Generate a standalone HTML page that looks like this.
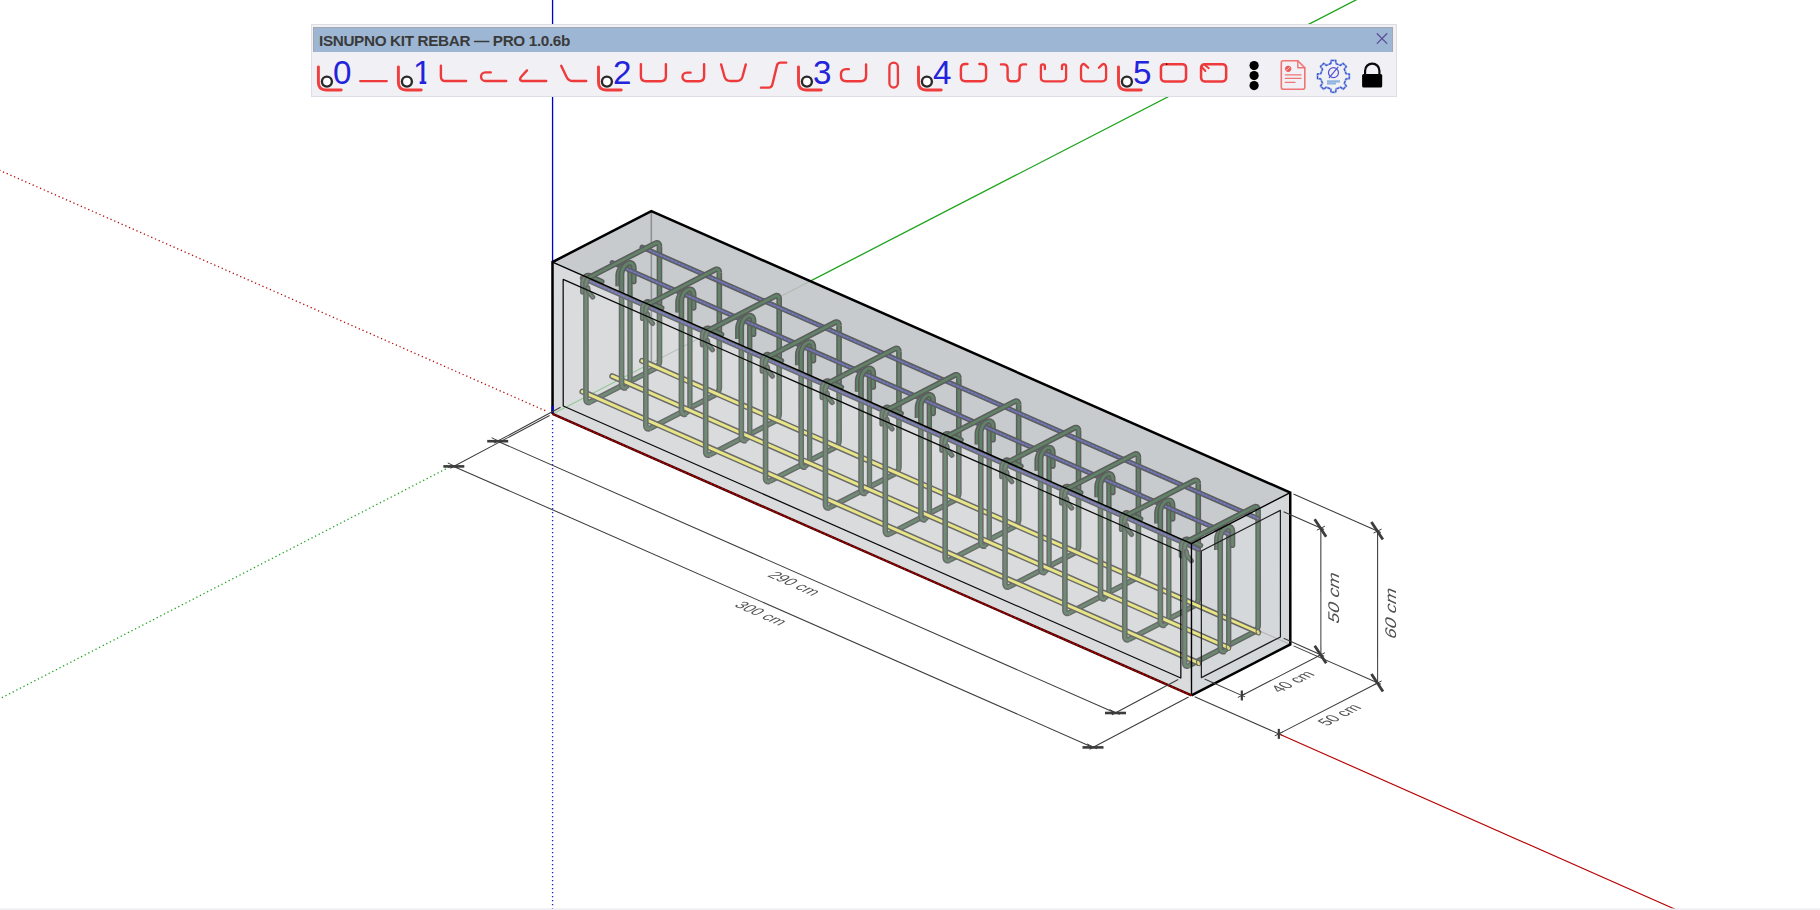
<!DOCTYPE html>
<html lang="en">
<head>
<meta charset="utf-8">
<title>ISNUPNO KIT REBAR</title>
<style>
html,body{margin:0;padding:0;background:#fff;}
body{width:1820px;height:910px;overflow:hidden;position:relative;font-family:"Liberation Sans",sans-serif;}
#scene{position:absolute;left:0;top:0;display:block;}

#tb{position:absolute;left:311px;top:24px;width:1084px;height:71px;background:#f1f0f5;border:1px solid #dddde5;}
#tbtitle{position:absolute;left:1px;top:2px;width:1078px;height:23.5px;background:#9db6d3;border-top:1px solid #a4a8ae;border-left:1px solid #a4a8ae;border-right:1px solid #a4a8ae;}
#tbtitle span{position:absolute;left:5.0px;top:4.2px;font:bold 15.3px/18px "Liberation Sans",sans-serif;color:#3a3a3a;white-space:nowrap;letter-spacing:-0.36px;}
#tbicons{position:absolute;left:-1px;top:-1px;}
#tbicons text{font-family:"Liberation Sans",sans-serif;font-size:33.2px;fill:#2323dc;}

</style>
</head>
<body>
<svg id="scene" width="1820" height="910" viewBox="0 0 1820 910" fill="none" stroke-linejoin="round">
<rect width="1820" height="910" fill="#fff"/>
<path d="M552.57 0 V413.92" stroke="#0000d2" stroke-width="1.3"/>
<path d="M552.57 419.92 V910" stroke="#1c1cd2" stroke-width="1.35" stroke-dasharray="1.3 2.7"/>
<path d="M552.57 413.92 L1530.39 -89.95" stroke="#1ba31b" stroke-width="1.3"/>
<path d="M453.02 465.23 L-69.67 734.57" stroke="#1fa41f" stroke-width="1.3" stroke-dasharray="1.3 2.75"/>
<path d="M545.25 410.7 L-88.02 131.72" stroke="#b41212" stroke-width="1.3" stroke-dasharray="1.3 2.75"/>
<path d="M552.5 262.05 L651.32 211.12 L1290.25 492.6 L1191.43 543.53Z" fill="#c8cbcd"/>
<path d="M552.57 413.92 L552.5 262.05 L1191.43 543.53 L1191.5 695.4Z" fill="#d7dadc"/>
<path d="M1191.5 695.4 L1191.43 543.53 L1290.25 492.6 L1290.32 644.47Z" fill="#d4d7d9"/>
<path d="M651.4 363 L651.32 211.12" stroke="#8f9294" stroke-width="1.6"/>
<path d="M651.4 363 L1290.32 644.47" stroke="#a9adaf" stroke-width="1"/>
<path d="M552.57 413.92 L651.4 363" stroke="#8cc48c" stroke-width="1.1"/>
<path d="M651.4 363 L810.51 281.01" stroke="#aab8aa" stroke-width="1"/>
<g id="rebar">
<path d="M589.94 402.11 L655.56 368.3 L656.17 367.92 L656.78 367.42 L657.35 366.82 L657.88 366.14 L658.35 365.38 L658.75 364.57 L659.08 363.72 L659.31 362.86 L659.46 362.02 L659.51 361.2 L659.45 246.28" stroke="#5c5d5c" stroke-width="5.65" stroke-linecap="butt"/>
<path d="M589.94 402.11 L655.56 368.3 L656.17 367.92 L656.78 367.42 L657.35 366.82 L657.88 366.14 L658.35 365.38 L658.75 364.57 L659.08 363.72 L659.31 362.86 L659.46 362.02 L659.51 361.2 L659.45 246.28" stroke="#618368" stroke-width="2.65" stroke-linecap="butt"/>
<path d="M649.8 428.49 L715.42 394.67 L716.04 394.29 L716.65 393.8 L717.22 393.2 L717.75 392.51 L718.22 391.75 L718.62 390.94 L718.94 390.1 L719.18 389.24 L719.33 388.39 L719.37 387.57 L719.32 272.66" stroke="#5c5d5c" stroke-width="5.65" stroke-linecap="butt"/>
<path d="M649.8 428.49 L715.42 394.67 L716.04 394.29 L716.65 393.8 L717.22 393.2 L717.75 392.51 L718.22 391.75 L718.62 390.94 L718.94 390.1 L719.18 389.24 L719.33 388.39 L719.37 387.57 L719.32 272.66" stroke="#618368" stroke-width="2.65" stroke-linecap="butt"/>
<path d="M709.67 454.86 L775.29 421.05 L775.91 420.67 L776.51 420.17 L777.09 419.57 L777.61 418.88 L778.09 418.13 L778.49 417.31 L778.81 416.47 L779.05 415.61 L779.19 414.77 L779.24 413.95 L779.18 299.03" stroke="#5c5d5c" stroke-width="5.65" stroke-linecap="butt"/>
<path d="M709.67 454.86 L775.29 421.05 L775.91 420.67 L776.51 420.17 L777.09 419.57 L777.61 418.88 L778.09 418.13 L778.49 417.31 L778.81 416.47 L779.05 415.61 L779.19 414.77 L779.24 413.95 L779.18 299.03" stroke="#618368" stroke-width="2.65" stroke-linecap="butt"/>
<path d="M769.54 481.24 L835.16 447.42 L835.78 447.04 L836.38 446.55 L836.95 445.95 L837.48 445.26 L837.95 444.5 L838.36 443.69 L838.68 442.84 L838.92 441.99 L839.06 441.14 L839.11 440.32 L839.05 325.4" stroke="#5c5d5c" stroke-width="5.65" stroke-linecap="butt"/>
<path d="M769.54 481.24 L835.16 447.42 L835.78 447.04 L836.38 446.55 L836.95 445.95 L837.48 445.26 L837.95 444.5 L838.36 443.69 L838.68 442.84 L838.92 441.99 L839.06 441.14 L839.11 440.32 L839.05 325.4" stroke="#618368" stroke-width="2.65" stroke-linecap="butt"/>
<path d="M829.41 507.61 L895.03 473.8 L895.64 473.42 L896.25 472.92 L896.82 472.32 L897.35 471.63 L897.82 470.87 L898.22 470.06 L898.55 469.22 L898.78 468.36 L898.93 467.51 L898.98 466.7 L898.92 351.78" stroke="#5c5d5c" stroke-width="5.65" stroke-linecap="butt"/>
<path d="M829.41 507.61 L895.03 473.8 L895.64 473.42 L896.25 472.92 L896.82 472.32 L897.35 471.63 L897.82 470.87 L898.22 470.06 L898.55 469.22 L898.78 468.36 L898.93 467.51 L898.98 466.7 L898.92 351.78" stroke="#618368" stroke-width="2.65" stroke-linecap="butt"/>
<path d="M889.27 533.99 L954.89 500.17 L955.51 499.79 L956.11 499.29 L956.69 498.69 L957.22 498.01 L957.69 497.25 L958.09 496.44 L958.41 495.59 L958.65 494.74 L958.79 493.89 L958.84 493.07 L958.79 378.15" stroke="#5c5d5c" stroke-width="5.65" stroke-linecap="butt"/>
<path d="M889.27 533.99 L954.89 500.17 L955.51 499.79 L956.11 499.29 L956.69 498.69 L957.22 498.01 L957.69 497.25 L958.09 496.44 L958.41 495.59 L958.65 494.74 L958.79 493.89 L958.84 493.07 L958.79 378.15" stroke="#618368" stroke-width="2.65" stroke-linecap="butt"/>
<path d="M949.14 560.36 L1014.76 526.55 L1015.38 526.16 L1015.98 525.67 L1016.55 525.07 L1017.08 524.38 L1017.55 523.62 L1017.96 522.81 L1018.28 521.97 L1018.52 521.11 L1018.66 520.26 L1018.71 519.45 L1018.65 404.53" stroke="#5c5d5c" stroke-width="5.65" stroke-linecap="butt"/>
<path d="M949.14 560.36 L1014.76 526.55 L1015.38 526.16 L1015.98 525.67 L1016.55 525.07 L1017.08 524.38 L1017.55 523.62 L1017.96 522.81 L1018.28 521.97 L1018.52 521.11 L1018.66 520.26 L1018.71 519.45 L1018.65 404.53" stroke="#618368" stroke-width="2.65" stroke-linecap="butt"/>
<path d="M1009.01 586.73 L1074.63 552.92 L1075.25 552.54 L1075.85 552.04 L1076.42 551.44 L1076.95 550.76 L1077.42 550 L1077.82 549.18 L1078.15 548.34 L1078.39 547.48 L1078.53 546.64 L1078.58 545.82 L1078.52 430.9" stroke="#5c5d5c" stroke-width="5.65" stroke-linecap="butt"/>
<path d="M1009.01 586.73 L1074.63 552.92 L1075.25 552.54 L1075.85 552.04 L1076.42 551.44 L1076.95 550.76 L1077.42 550 L1077.82 549.18 L1078.15 548.34 L1078.39 547.48 L1078.53 546.64 L1078.58 545.82 L1078.52 430.9" stroke="#618368" stroke-width="2.65" stroke-linecap="butt"/>
<path d="M1068.87 613.11 L1134.49 579.29 L1135.11 578.91 L1135.72 578.42 L1136.29 577.82 L1136.82 577.13 L1137.29 576.37 L1137.69 575.56 L1138.02 574.71 L1138.25 573.86 L1138.4 573.01 L1138.45 572.19 L1138.39 457.28" stroke="#5c5d5c" stroke-width="5.65" stroke-linecap="butt"/>
<path d="M1068.87 613.11 L1134.49 579.29 L1135.11 578.91 L1135.72 578.42 L1136.29 577.82 L1136.82 577.13 L1137.29 576.37 L1137.69 575.56 L1138.02 574.71 L1138.25 573.86 L1138.4 573.01 L1138.45 572.19 L1138.39 457.28" stroke="#618368" stroke-width="2.65" stroke-linecap="butt"/>
<path d="M1128.74 639.48 L1194.36 605.67 L1194.98 605.29 L1195.58 604.79 L1196.16 604.19 L1196.68 603.5 L1197.16 602.74 L1197.56 601.93 L1197.88 601.09 L1198.12 600.23 L1198.26 599.39 L1198.31 598.57 L1198.26 483.65" stroke="#5c5d5c" stroke-width="5.65" stroke-linecap="butt"/>
<path d="M1128.74 639.48 L1194.36 605.67 L1194.98 605.29 L1195.58 604.79 L1196.16 604.19 L1196.68 603.5 L1197.16 602.74 L1197.56 601.93 L1197.88 601.09 L1198.12 600.23 L1198.26 599.39 L1198.31 598.57 L1198.26 483.65" stroke="#618368" stroke-width="2.65" stroke-linecap="butt"/>
<path d="M1188.61 665.86 L1254.23 632.04 L1254.85 631.66 L1255.45 631.17 L1256.02 630.57 L1256.55 629.88 L1257.02 629.12 L1257.43 628.31 L1257.75 627.46 L1257.99 626.61 L1258.13 625.76 L1258.18 624.94 L1258.12 510.02" stroke="#5c5d5c" stroke-width="5.65" stroke-linecap="butt"/>
<path d="M1188.61 665.86 L1254.23 632.04 L1254.85 631.66 L1255.45 631.17 L1256.02 630.57 L1256.55 629.88 L1257.02 629.12 L1257.43 628.31 L1257.75 627.46 L1257.99 626.61 L1258.13 625.76 L1258.18 624.94 L1258.12 510.02" stroke="#618368" stroke-width="2.65" stroke-linecap="butt"/>
<path d="M642.06 360.82 L1258.2 632.26" stroke="#5c5d5c" stroke-width="5.94" stroke-linecap="round"/>
<path d="M642.06 360.82 L1258.2 632.26" stroke="#e8e57c" stroke-width="2.94" stroke-linecap="round"/>
<path d="M642.01 247.17 L1258.14 518.61" stroke="#5c5d5c" stroke-width="5.07" stroke-linecap="round"/>
<path d="M642.01 247.17 L1258.14 518.61" stroke="#696ea8" stroke-width="2.07" stroke-linecap="round"/>
<path d="M642.01 247.17 L1258.14 518.61" stroke="#8390d4" stroke-width="1" stroke-dasharray="1.6 2.4" stroke-opacity="0.7"/>
<path d="M623.64 264.65 L625.27 264.02 L626.8 263.98 L628.12 264.54 L629.13 265.66 L629.77 267.26 L629.99 269.22 L630.04 378.83 L629.89 380.45 L629.42 382.12 L628.68 383.73 L627.72 385.17 L626.6 386.35 L625.4 387.17" stroke="#5c5d5c" stroke-width="5.36" stroke-linecap="butt"/>
<path d="M623.64 264.65 L625.27 264.02 L626.8 263.98 L628.12 264.54 L629.13 265.66 L629.77 267.26 L629.99 269.22 L630.04 378.83 L629.89 380.45 L629.42 382.12 L628.68 383.73 L627.72 385.17 L626.6 386.35 L625.4 387.17" stroke="#618368" stroke-width="2.36" stroke-linecap="butt"/>
<path d="M627.67 263.38 L629.26 262.83 L630.74 262.85 L632.01 263.45 L632.98 264.57 L633.6 266.15 L633.81 268.07 L633.81 281.49" stroke="#5c5d5c" stroke-width="5.65" stroke-linecap="round"/>
<path d="M627.67 263.38 L629.26 262.83 L630.74 262.85 L632.01 263.45 L632.98 264.57 L633.6 266.15 L633.81 268.07 L633.81 281.49" stroke="#618368" stroke-width="2.65" stroke-linecap="round"/>
<path d="M683.51 291.02 L685.14 290.39 L686.67 290.36 L687.98 290.92 L689 292.04 L689.64 293.63 L689.86 295.6 L689.91 405.2 L689.75 406.82 L689.29 408.5 L688.55 410.11 L687.59 411.55 L686.47 412.72 L685.27 413.54" stroke="#5c5d5c" stroke-width="5.36" stroke-linecap="butt"/>
<path d="M683.51 291.02 L685.14 290.39 L686.67 290.36 L687.98 290.92 L689 292.04 L689.64 293.63 L689.86 295.6 L689.91 405.2 L689.75 406.82 L689.29 408.5 L688.55 410.11 L687.59 411.55 L686.47 412.72 L685.27 413.54" stroke="#618368" stroke-width="2.36" stroke-linecap="butt"/>
<path d="M687.54 289.76 L689.13 289.21 L690.61 289.23 L691.88 289.82 L692.85 290.94 L693.46 292.52 L693.67 294.44 L693.68 307.86" stroke="#5c5d5c" stroke-width="5.65" stroke-linecap="round"/>
<path d="M687.54 289.76 L689.13 289.21 L690.61 289.23 L691.88 289.82 L692.85 290.94 L693.46 292.52 L693.67 294.44 L693.68 307.86" stroke="#618368" stroke-width="2.65" stroke-linecap="round"/>
<path d="M743.38 317.4 L745.01 316.77 L746.53 316.73 L747.85 317.29 L748.86 318.41 L749.5 320.01 L749.72 321.97 L749.78 431.57 L749.62 433.2 L749.16 434.87 L748.42 436.48 L747.46 437.92 L746.34 439.09 L745.14 439.92" stroke="#5c5d5c" stroke-width="5.36" stroke-linecap="butt"/>
<path d="M743.38 317.4 L745.01 316.77 L746.53 316.73 L747.85 317.29 L748.86 318.41 L749.5 320.01 L749.72 321.97 L749.78 431.57 L749.62 433.2 L749.16 434.87 L748.42 436.48 L747.46 437.92 L746.34 439.09 L745.14 439.92" stroke="#618368" stroke-width="2.36" stroke-linecap="butt"/>
<path d="M747.41 316.13 L749 315.58 L750.47 315.6 L751.74 316.2 L752.72 317.32 L753.33 318.9 L753.54 320.82 L753.55 334.23" stroke="#5c5d5c" stroke-width="5.65" stroke-linecap="round"/>
<path d="M747.41 316.13 L749 315.58 L750.47 315.6 L751.74 316.2 L752.72 317.32 L753.33 318.9 L753.54 320.82 L753.55 334.23" stroke="#618368" stroke-width="2.65" stroke-linecap="round"/>
<path d="M803.25 343.77 L804.87 343.14 L806.4 343.1 L807.72 343.67 L808.73 344.79 L809.37 346.38 L809.59 348.35 L809.65 457.95 L809.49 459.57 L809.02 461.24 L808.29 462.86 L807.33 464.3 L806.21 465.47 L805 466.29" stroke="#5c5d5c" stroke-width="5.36" stroke-linecap="butt"/>
<path d="M803.25 343.77 L804.87 343.14 L806.4 343.1 L807.72 343.67 L808.73 344.79 L809.37 346.38 L809.59 348.35 L809.65 457.95 L809.49 459.57 L809.02 461.24 L808.29 462.86 L807.33 464.3 L806.21 465.47 L805 466.29" stroke="#618368" stroke-width="2.36" stroke-linecap="butt"/>
<path d="M807.28 342.5 L808.86 341.95 L810.34 341.98 L811.61 342.57 L812.58 343.69 L813.2 345.27 L813.41 347.19 L813.41 360.61" stroke="#5c5d5c" stroke-width="5.65" stroke-linecap="round"/>
<path d="M807.28 342.5 L808.86 341.95 L810.34 341.98 L811.61 342.57 L812.58 343.69 L813.2 345.27 L813.41 347.19 L813.41 360.61" stroke="#618368" stroke-width="2.65" stroke-linecap="round"/>
<path d="M863.11 370.15 L864.74 369.51 L866.27 369.48 L867.58 370.04 L868.6 371.16 L869.24 372.76 L869.46 374.72 L869.51 484.32 L869.35 485.94 L868.89 487.62 L868.15 489.23 L867.19 490.67 L866.07 491.84 L864.87 492.67" stroke="#5c5d5c" stroke-width="5.36" stroke-linecap="butt"/>
<path d="M863.11 370.15 L864.74 369.51 L866.27 369.48 L867.58 370.04 L868.6 371.16 L869.24 372.76 L869.46 374.72 L869.51 484.32 L869.35 485.94 L868.89 487.62 L868.15 489.23 L867.19 490.67 L866.07 491.84 L864.87 492.67" stroke="#618368" stroke-width="2.36" stroke-linecap="butt"/>
<path d="M867.14 368.88 L868.73 368.33 L870.21 368.35 L871.48 368.94 L872.45 370.07 L873.07 371.64 L873.27 373.57 L873.28 386.98" stroke="#5c5d5c" stroke-width="5.65" stroke-linecap="round"/>
<path d="M867.14 368.88 L868.73 368.33 L870.21 368.35 L871.48 368.94 L872.45 370.07 L873.07 371.64 L873.27 373.57 L873.28 386.98" stroke="#618368" stroke-width="2.65" stroke-linecap="round"/>
<path d="M922.98 396.52 L924.61 395.89 L926.13 395.85 L927.45 396.41 L928.47 397.53 L929.11 399.13 L929.33 401.09 L929.38 510.7 L929.22 512.32 L928.76 513.99 L928.02 515.6 L927.06 517.05 L925.94 518.22 L924.74 519.04" stroke="#5c5d5c" stroke-width="5.36" stroke-linecap="butt"/>
<path d="M922.98 396.52 L924.61 395.89 L926.13 395.85 L927.45 396.41 L928.47 397.53 L929.11 399.13 L929.33 401.09 L929.38 510.7 L929.22 512.32 L928.76 513.99 L928.02 515.6 L927.06 517.05 L925.94 518.22 L924.74 519.04" stroke="#618368" stroke-width="2.36" stroke-linecap="butt"/>
<path d="M927.01 395.25 L928.6 394.7 L930.08 394.72 L931.34 395.32 L932.32 396.44 L932.93 398.02 L933.14 399.94 L933.15 413.36" stroke="#5c5d5c" stroke-width="5.65" stroke-linecap="round"/>
<path d="M927.01 395.25 L928.6 394.7 L930.08 394.72 L931.34 395.32 L932.32 396.44 L932.93 398.02 L933.14 399.94 L933.15 413.36" stroke="#618368" stroke-width="2.65" stroke-linecap="round"/>
<path d="M982.85 422.89 L984.47 422.26 L986 422.23 L987.32 422.79 L988.33 423.91 L988.97 425.51 L989.19 427.47 L989.25 537.07 L989.09 538.69 L988.63 540.37 L987.89 541.98 L986.93 543.42 L985.81 544.59 L984.61 545.41" stroke="#5c5d5c" stroke-width="5.36" stroke-linecap="butt"/>
<path d="M982.85 422.89 L984.47 422.26 L986 422.23 L987.32 422.79 L988.33 423.91 L988.97 425.51 L989.19 427.47 L989.25 537.07 L989.09 538.69 L988.63 540.37 L987.89 541.98 L986.93 543.42 L985.81 544.59 L984.61 545.41" stroke="#618368" stroke-width="2.36" stroke-linecap="butt"/>
<path d="M986.88 421.63 L988.46 421.08 L989.94 421.1 L991.21 421.69 L992.19 422.82 L992.8 424.39 L993.01 426.32 L993.02 439.73" stroke="#5c5d5c" stroke-width="5.65" stroke-linecap="round"/>
<path d="M986.88 421.63 L988.46 421.08 L989.94 421.1 L991.21 421.69 L992.19 422.82 L992.8 424.39 L993.01 426.32 L993.02 439.73" stroke="#618368" stroke-width="2.65" stroke-linecap="round"/>
<path d="M1042.72 449.27 L1044.34 448.64 L1045.87 448.6 L1047.19 449.16 L1048.2 450.28 L1048.84 451.88 L1049.06 453.84 L1049.11 563.45 L1048.96 565.07 L1048.49 566.74 L1047.76 568.35 L1046.79 569.79 L1045.67 570.97 L1044.47 571.79" stroke="#5c5d5c" stroke-width="5.36" stroke-linecap="butt"/>
<path d="M1042.72 449.27 L1044.34 448.64 L1045.87 448.6 L1047.19 449.16 L1048.2 450.28 L1048.84 451.88 L1049.06 453.84 L1049.11 563.45 L1048.96 565.07 L1048.49 566.74 L1047.76 568.35 L1046.79 569.79 L1045.67 570.97 L1044.47 571.79" stroke="#618368" stroke-width="2.36" stroke-linecap="butt"/>
<path d="M1046.75 448 L1048.33 447.45 L1049.81 447.47 L1051.08 448.07 L1052.05 449.19 L1052.67 450.77 L1052.88 452.69 L1052.88 466.11" stroke="#5c5d5c" stroke-width="5.65" stroke-linecap="round"/>
<path d="M1046.75 448 L1048.33 447.45 L1049.81 447.47 L1051.08 448.07 L1052.05 449.19 L1052.67 450.77 L1052.88 452.69 L1052.88 466.11" stroke="#618368" stroke-width="2.65" stroke-linecap="round"/>
<path d="M1102.58 475.64 L1104.21 475.01 L1105.74 474.97 L1107.05 475.54 L1108.07 476.66 L1108.71 478.25 L1108.93 480.22 L1108.98 589.82 L1108.82 591.44 L1108.36 593.11 L1107.62 594.73 L1106.66 596.17 L1105.54 597.34 L1104.34 598.16" stroke="#5c5d5c" stroke-width="5.36" stroke-linecap="butt"/>
<path d="M1102.58 475.64 L1104.21 475.01 L1105.74 474.97 L1107.05 475.54 L1108.07 476.66 L1108.71 478.25 L1108.93 480.22 L1108.98 589.82 L1108.82 591.44 L1108.36 593.11 L1107.62 594.73 L1106.66 596.17 L1105.54 597.34 L1104.34 598.16" stroke="#618368" stroke-width="2.36" stroke-linecap="butt"/>
<path d="M1106.61 474.37 L1108.2 473.83 L1109.68 473.85 L1110.95 474.44 L1111.92 475.56 L1112.53 477.14 L1112.74 479.06 L1112.75 492.48" stroke="#5c5d5c" stroke-width="5.65" stroke-linecap="round"/>
<path d="M1106.61 474.37 L1108.2 473.83 L1109.68 473.85 L1110.95 474.44 L1111.92 475.56 L1112.53 477.14 L1112.74 479.06 L1112.75 492.48" stroke="#618368" stroke-width="2.65" stroke-linecap="round"/>
<path d="M1162.45 502.02 L1164.08 501.38 L1165.6 501.35 L1166.92 501.91 L1167.94 503.03 L1168.58 504.63 L1168.79 506.59 L1168.85 616.19 L1168.69 617.82 L1168.23 619.49 L1167.49 621.1 L1166.53 622.54 L1165.41 623.71 L1164.21 624.54" stroke="#5c5d5c" stroke-width="5.36" stroke-linecap="butt"/>
<path d="M1162.45 502.02 L1164.08 501.38 L1165.6 501.35 L1166.92 501.91 L1167.94 503.03 L1168.58 504.63 L1168.79 506.59 L1168.85 616.19 L1168.69 617.82 L1168.23 619.49 L1167.49 621.1 L1166.53 622.54 L1165.41 623.71 L1164.21 624.54" stroke="#618368" stroke-width="2.36" stroke-linecap="butt"/>
<path d="M1166.48 500.75 L1168.07 500.2 L1169.54 500.22 L1170.81 500.81 L1171.79 501.94 L1172.4 503.52 L1172.61 505.44 L1172.62 518.85" stroke="#5c5d5c" stroke-width="5.65" stroke-linecap="round"/>
<path d="M1166.48 500.75 L1168.07 500.2 L1169.54 500.22 L1170.81 500.81 L1171.79 501.94 L1172.4 503.52 L1172.61 505.44 L1172.62 518.85" stroke="#618368" stroke-width="2.65" stroke-linecap="round"/>
<path d="M1222.32 528.39 L1223.94 527.76 L1225.47 527.72 L1226.79 528.28 L1227.8 529.4 L1228.44 531 L1228.66 532.97 L1228.72 642.57 L1228.56 644.19 L1228.1 645.86 L1227.36 647.48 L1226.4 648.92 L1225.28 650.09 L1224.07 650.91" stroke="#5c5d5c" stroke-width="5.36" stroke-linecap="butt"/>
<path d="M1222.32 528.39 L1223.94 527.76 L1225.47 527.72 L1226.79 528.28 L1227.8 529.4 L1228.44 531 L1228.66 532.97 L1228.72 642.57 L1228.56 644.19 L1228.1 645.86 L1227.36 647.48 L1226.4 648.92 L1225.28 650.09 L1224.07 650.91" stroke="#618368" stroke-width="2.36" stroke-linecap="butt"/>
<path d="M1226.35 527.12 L1227.93 526.57 L1229.41 526.6 L1230.68 527.19 L1231.66 528.31 L1232.27 529.89 L1232.48 531.81 L1232.49 545.23" stroke="#5c5d5c" stroke-width="5.65" stroke-linecap="round"/>
<path d="M1226.35 527.12 L1227.93 526.57 L1229.41 526.6 L1230.68 527.19 L1231.66 528.31 L1232.27 529.89 L1232.48 531.81 L1232.49 545.23" stroke="#618368" stroke-width="2.65" stroke-linecap="round"/>
<path d="M612.22 376.2 L1228.35 647.64" stroke="#5c5d5c" stroke-width="5.94" stroke-linecap="round"/>
<path d="M612.22 376.2 L1228.35 647.64" stroke="#e8e57c" stroke-width="2.94" stroke-linecap="round"/>
<path d="M612.16 262.55 L1228.3 533.99" stroke="#5c5d5c" stroke-width="5.07" stroke-linecap="round"/>
<path d="M612.16 262.55 L1228.3 533.99" stroke="#696ea8" stroke-width="2.07" stroke-linecap="round"/>
<path d="M612.16 262.55 L1228.3 533.99" stroke="#8390d4" stroke-width="1" stroke-dasharray="1.6 2.4" stroke-opacity="0.7"/>
<path d="M659.45 246.28 L659.45 246.28 L659.4 245.52 L659.26 244.82 L659.02 244.21 L658.69 243.7 L658.29 243.3 L657.82 243.03 L657.29 242.88 L656.72 242.87 L656.11 243 L655.49 243.26 L604.9 269.33" stroke="#5c5d5c" stroke-width="5.65" stroke-linecap="butt"/>
<path d="M659.45 246.28 L659.45 246.28 L659.4 245.52 L659.26 244.82 L659.02 244.21 L658.69 243.7 L658.29 243.3 L657.82 243.03 L657.29 242.88 L656.72 242.87 L656.11 243 L655.49 243.26 L604.9 269.33" stroke="#618368" stroke-width="2.65" stroke-linecap="butt"/>
<path d="M719.32 272.66 L719.32 272.66 L719.27 271.89 L719.12 271.19 L718.89 270.58 L718.56 270.07 L718.16 269.67 L717.69 269.4 L717.16 269.26 L716.58 269.25 L715.98 269.37 L715.36 269.63 L664.76 295.7" stroke="#5c5d5c" stroke-width="5.65" stroke-linecap="butt"/>
<path d="M719.32 272.66 L719.32 272.66 L719.27 271.89 L719.12 271.19 L718.89 270.58 L718.56 270.07 L718.16 269.67 L717.69 269.4 L717.16 269.26 L716.58 269.25 L715.98 269.37 L715.36 269.63 L664.76 295.7" stroke="#618368" stroke-width="2.65" stroke-linecap="butt"/>
<path d="M779.18 299.03 L779.18 299.03 L779.14 298.26 L778.99 297.57 L778.75 296.95 L778.43 296.44 L778.03 296.05 L777.55 295.77 L777.02 295.63 L776.45 295.62 L775.85 295.75 L775.23 296 L724.63 322.08" stroke="#5c5d5c" stroke-width="5.65" stroke-linecap="butt"/>
<path d="M779.18 299.03 L779.18 299.03 L779.14 298.26 L778.99 297.57 L778.75 296.95 L778.43 296.44 L778.03 296.05 L777.55 295.77 L777.02 295.63 L776.45 295.62 L775.85 295.75 L775.23 296 L724.63 322.08" stroke="#618368" stroke-width="2.65" stroke-linecap="butt"/>
<path d="M839.05 325.4 L839.05 325.4 L839 324.64 L838.86 323.94 L838.62 323.33 L838.3 322.82 L837.89 322.42 L837.42 322.15 L836.89 322.01 L836.32 322 L835.71 322.12 L835.1 322.38 L784.5 348.45" stroke="#5c5d5c" stroke-width="5.65" stroke-linecap="butt"/>
<path d="M839.05 325.4 L839.05 325.4 L839 324.64 L838.86 323.94 L838.62 323.33 L838.3 322.82 L837.89 322.42 L837.42 322.15 L836.89 322.01 L836.32 322 L835.71 322.12 L835.1 322.38 L784.5 348.45" stroke="#618368" stroke-width="2.65" stroke-linecap="butt"/>
<path d="M898.92 351.78 L898.92 351.78 L898.87 351.01 L898.72 350.31 L898.49 349.7 L898.16 349.19 L897.76 348.8 L897.29 348.52 L896.76 348.38 L896.19 348.37 L895.58 348.5 L894.96 348.75 L844.37 374.83" stroke="#5c5d5c" stroke-width="5.65" stroke-linecap="butt"/>
<path d="M898.92 351.78 L898.92 351.78 L898.87 351.01 L898.72 350.31 L898.49 349.7 L898.16 349.19 L897.76 348.8 L897.29 348.52 L896.76 348.38 L896.19 348.37 L895.58 348.5 L894.96 348.75 L844.37 374.83" stroke="#618368" stroke-width="2.65" stroke-linecap="butt"/>
<path d="M958.79 378.15 L958.79 378.15 L958.74 377.39 L958.59 376.69 L958.35 376.08 L958.03 375.57 L957.63 375.17 L957.15 374.9 L956.63 374.75 L956.05 374.75 L955.45 374.87 L954.83 375.13 L904.23 401.2" stroke="#5c5d5c" stroke-width="5.65" stroke-linecap="butt"/>
<path d="M958.79 378.15 L958.79 378.15 L958.74 377.39 L958.59 376.69 L958.35 376.08 L958.03 375.57 L957.63 375.17 L957.15 374.9 L956.63 374.75 L956.05 374.75 L955.45 374.87 L954.83 375.13 L904.23 401.2" stroke="#618368" stroke-width="2.65" stroke-linecap="butt"/>
<path d="M1018.65 404.53 L1018.65 404.53 L1018.6 403.76 L1018.46 403.06 L1018.22 402.45 L1017.9 401.94 L1017.49 401.54 L1017.02 401.27 L1016.49 401.13 L1015.92 401.12 L1015.32 401.25 L1014.7 401.5 L964.1 427.58" stroke="#5c5d5c" stroke-width="5.65" stroke-linecap="butt"/>
<path d="M1018.65 404.53 L1018.65 404.53 L1018.6 403.76 L1018.46 403.06 L1018.22 402.45 L1017.9 401.94 L1017.49 401.54 L1017.02 401.27 L1016.49 401.13 L1015.92 401.12 L1015.32 401.25 L1014.7 401.5 L964.1 427.58" stroke="#618368" stroke-width="2.65" stroke-linecap="butt"/>
<path d="M1078.52 430.9 L1078.52 430.9 L1078.47 430.13 L1078.33 429.44 L1078.09 428.83 L1077.76 428.31 L1077.36 427.92 L1076.89 427.65 L1076.36 427.5 L1075.79 427.49 L1075.18 427.62 L1074.57 427.88 L1023.97 453.95" stroke="#5c5d5c" stroke-width="5.65" stroke-linecap="butt"/>
<path d="M1078.52 430.9 L1078.52 430.9 L1078.47 430.13 L1078.33 429.44 L1078.09 428.83 L1077.76 428.31 L1077.36 427.92 L1076.89 427.65 L1076.36 427.5 L1075.79 427.49 L1075.18 427.62 L1074.57 427.88 L1023.97 453.95" stroke="#618368" stroke-width="2.65" stroke-linecap="butt"/>
<path d="M1138.39 457.28 L1138.39 457.28 L1138.34 456.51 L1138.19 455.81 L1137.96 455.2 L1137.63 454.69 L1137.23 454.29 L1136.76 454.02 L1136.23 453.88 L1135.65 453.87 L1135.05 453.99 L1134.43 454.25 L1083.83 480.32" stroke="#5c5d5c" stroke-width="5.65" stroke-linecap="butt"/>
<path d="M1138.39 457.28 L1138.39 457.28 L1138.34 456.51 L1138.19 455.81 L1137.96 455.2 L1137.63 454.69 L1137.23 454.29 L1136.76 454.02 L1136.23 453.88 L1135.65 453.87 L1135.05 453.99 L1134.43 454.25 L1083.83 480.32" stroke="#618368" stroke-width="2.65" stroke-linecap="butt"/>
<path d="M1198.26 483.65 L1198.26 483.65 L1198.21 482.88 L1198.06 482.19 L1197.82 481.57 L1197.5 481.06 L1197.1 480.67 L1196.62 480.39 L1196.09 480.25 L1195.52 480.24 L1194.92 480.37 L1194.3 480.62 L1143.7 506.7" stroke="#5c5d5c" stroke-width="5.65" stroke-linecap="butt"/>
<path d="M1198.26 483.65 L1198.26 483.65 L1198.21 482.88 L1198.06 482.19 L1197.82 481.57 L1197.5 481.06 L1197.1 480.67 L1196.62 480.39 L1196.09 480.25 L1195.52 480.24 L1194.92 480.37 L1194.3 480.62 L1143.7 506.7" stroke="#618368" stroke-width="2.65" stroke-linecap="butt"/>
<path d="M1258.12 510.02 L1258.12 510.02 L1258.07 509.26 L1257.93 508.56 L1257.69 507.95 L1257.37 507.44 L1256.96 507.04 L1256.49 506.77 L1255.96 506.63 L1255.39 506.62 L1254.79 506.74 L1254.17 507 L1203.57 533.07" stroke="#5c5d5c" stroke-width="5.65" stroke-linecap="butt"/>
<path d="M1258.12 510.02 L1258.12 510.02 L1258.07 509.26 L1257.93 508.56 L1257.69 507.95 L1257.37 507.44 L1256.96 507.04 L1256.49 506.77 L1255.96 506.63 L1255.39 506.62 L1254.79 506.74 L1254.17 507 L1203.57 533.07" stroke="#618368" stroke-width="2.65" stroke-linecap="butt"/>
<path d="M617.74 286.17 L617.73 275.54 L617.94 273.4 L618.55 271.19 L619.53 269.06 L620.8 267.16 L622.27 265.62 L623.86 264.53" stroke="#5c5d5c" stroke-width="4.8" stroke-linecap="butt"/>
<path d="M617.74 286.17 L617.73 275.54 L617.94 273.4 L618.55 271.19 L619.53 269.06 L620.8 267.16 L622.27 265.62 L623.86 264.53" stroke="#618368" stroke-width="1.8" stroke-linecap="butt"/>
<path d="M626.25 387.54 L625.05 387.96 L623.93 387.94 L622.97 387.49 L622.23 386.64 L621.76 385.45 L621.61 383.99 L621.55 274.39 L621.71 272.52 L622.18 270.58 L622.94 268.68 L623.95 266.92 L625.16 265.37 L626.49 264.14 L627.89 263.28" stroke="#5c5d5c" stroke-width="5.65" stroke-linecap="butt"/>
<path d="M626.25 387.54 L625.05 387.96 L623.93 387.94 L622.97 387.49 L622.23 386.64 L621.76 385.45 L621.61 383.99 L621.55 274.39 L621.71 272.52 L622.18 270.58 L622.94 268.68 L623.95 266.92 L625.16 265.37 L626.49 264.14 L627.89 263.28" stroke="#618368" stroke-width="2.65" stroke-linecap="butt"/>
<path d="M677.61 312.54 L677.6 301.91 L677.81 299.77 L678.42 297.57 L679.39 295.44 L680.66 293.54 L682.14 291.99 L683.73 290.91" stroke="#5c5d5c" stroke-width="4.8" stroke-linecap="butt"/>
<path d="M677.61 312.54 L677.6 301.91 L677.81 299.77 L678.42 297.57 L679.39 295.44 L680.66 293.54 L682.14 291.99 L683.73 290.91" stroke="#618368" stroke-width="1.8" stroke-linecap="butt"/>
<path d="M686.12 413.92 L684.92 414.33 L683.8 414.32 L682.84 413.87 L682.1 413.02 L681.63 411.82 L681.47 410.36 L681.42 300.76 L681.58 298.89 L682.05 296.96 L682.81 295.06 L683.82 293.29 L685.02 291.75 L686.36 290.51 L687.76 289.65" stroke="#5c5d5c" stroke-width="5.65" stroke-linecap="butt"/>
<path d="M686.12 413.92 L684.92 414.33 L683.8 414.32 L682.84 413.87 L682.1 413.02 L681.63 411.82 L681.47 410.36 L681.42 300.76 L681.58 298.89 L682.05 296.96 L682.81 295.06 L683.82 293.29 L685.02 291.75 L686.36 290.51 L687.76 289.65" stroke="#618368" stroke-width="2.65" stroke-linecap="butt"/>
<path d="M737.47 338.92 L737.47 328.29 L737.68 326.15 L738.29 323.94 L739.26 321.81 L740.53 319.91 L742.01 318.37 L743.59 317.28" stroke="#5c5d5c" stroke-width="4.8" stroke-linecap="butt"/>
<path d="M737.47 338.92 L737.47 328.29 L737.68 326.15 L738.29 323.94 L739.26 321.81 L740.53 319.91 L742.01 318.37 L743.59 317.28" stroke="#618368" stroke-width="1.8" stroke-linecap="butt"/>
<path d="M745.99 440.29 L744.79 440.71 L743.67 440.69 L742.7 440.24 L741.96 439.39 L741.5 438.19 L741.34 436.74 L741.29 327.13 L741.45 325.27 L741.92 323.33 L742.68 321.43 L743.69 319.66 L744.89 318.12 L746.23 316.89 L747.62 316.02" stroke="#5c5d5c" stroke-width="5.65" stroke-linecap="butt"/>
<path d="M745.99 440.29 L744.79 440.71 L743.67 440.69 L742.7 440.24 L741.96 439.39 L741.5 438.19 L741.34 436.74 L741.29 327.13 L741.45 325.27 L741.92 323.33 L742.68 321.43 L743.69 319.66 L744.89 318.12 L746.23 316.89 L747.62 316.02" stroke="#618368" stroke-width="2.65" stroke-linecap="butt"/>
<path d="M797.34 365.29 L797.34 354.66 L797.54 352.52 L798.16 350.31 L799.13 348.19 L800.4 346.29 L801.87 344.74 L803.46 343.66" stroke="#5c5d5c" stroke-width="4.8" stroke-linecap="butt"/>
<path d="M797.34 365.29 L797.34 354.66 L797.54 352.52 L798.16 350.31 L799.13 348.19 L800.4 346.29 L801.87 344.74 L803.46 343.66" stroke="#618368" stroke-width="1.8" stroke-linecap="butt"/>
<path d="M805.86 466.67 L804.65 467.08 L803.53 467.07 L802.57 466.62 L801.83 465.76 L801.37 464.57 L801.21 463.11 L801.15 353.51 L801.31 351.64 L801.79 349.71 L802.55 347.81 L803.55 346.04 L804.76 344.5 L806.09 343.26 L807.49 342.4" stroke="#5c5d5c" stroke-width="5.65" stroke-linecap="butt"/>
<path d="M805.86 466.67 L804.65 467.08 L803.53 467.07 L802.57 466.62 L801.83 465.76 L801.37 464.57 L801.21 463.11 L801.15 353.51 L801.31 351.64 L801.79 349.71 L802.55 347.81 L803.55 346.04 L804.76 344.5 L806.09 343.26 L807.49 342.4" stroke="#618368" stroke-width="2.65" stroke-linecap="butt"/>
<path d="M857.21 391.67 L857.2 381.03 L857.41 378.9 L858.02 376.69 L859 374.56 L860.26 372.66 L861.74 371.12 L863.33 370.03" stroke="#5c5d5c" stroke-width="4.8" stroke-linecap="butt"/>
<path d="M857.21 391.67 L857.2 381.03 L857.41 378.9 L858.02 376.69 L859 374.56 L860.26 372.66 L861.74 371.12 L863.33 370.03" stroke="#618368" stroke-width="1.8" stroke-linecap="butt"/>
<path d="M865.72 493.04 L864.52 493.46 L863.4 493.44 L862.44 492.99 L861.7 492.14 L861.23 490.94 L861.07 489.49 L861.02 379.88 L861.18 378.02 L861.65 376.08 L862.41 374.18 L863.42 372.41 L864.62 370.87 L865.96 369.64 L867.36 368.77" stroke="#5c5d5c" stroke-width="5.65" stroke-linecap="butt"/>
<path d="M865.72 493.04 L864.52 493.46 L863.4 493.44 L862.44 492.99 L861.7 492.14 L861.23 490.94 L861.07 489.49 L861.02 379.88 L861.18 378.02 L861.65 376.08 L862.41 374.18 L863.42 372.41 L864.62 370.87 L865.96 369.64 L867.36 368.77" stroke="#618368" stroke-width="2.65" stroke-linecap="butt"/>
<path d="M917.08 418.04 L917.07 407.41 L917.28 405.27 L917.89 403.06 L918.86 400.94 L920.13 399.03 L921.61 397.49 L923.19 396.4" stroke="#5c5d5c" stroke-width="4.8" stroke-linecap="butt"/>
<path d="M917.08 418.04 L917.07 407.41 L917.28 405.27 L917.89 403.06 L918.86 400.94 L920.13 399.03 L921.61 397.49 L923.19 396.4" stroke="#618368" stroke-width="1.8" stroke-linecap="butt"/>
<path d="M925.59 519.41 L924.39 519.83 L923.27 519.81 L922.3 519.36 L921.57 518.51 L921.1 517.32 L920.94 515.86 L920.89 406.26 L921.05 404.39 L921.52 402.46 L922.28 400.55 L923.29 398.79 L924.49 397.25 L925.83 396.01 L927.22 395.15" stroke="#5c5d5c" stroke-width="5.65" stroke-linecap="butt"/>
<path d="M925.59 519.41 L924.39 519.83 L923.27 519.81 L922.3 519.36 L921.57 518.51 L921.1 517.32 L920.94 515.86 L920.89 406.26 L921.05 404.39 L921.52 402.46 L922.28 400.55 L923.29 398.79 L924.49 397.25 L925.83 396.01 L927.22 395.15" stroke="#618368" stroke-width="2.65" stroke-linecap="butt"/>
<path d="M976.94 444.41 L976.94 433.78 L977.15 431.64 L977.76 429.44 L978.73 427.31 L980 425.41 L981.48 423.86 L983.06 422.78" stroke="#5c5d5c" stroke-width="4.8" stroke-linecap="butt"/>
<path d="M976.94 444.41 L976.94 433.78 L977.15 431.64 L977.76 429.44 L978.73 427.31 L980 425.41 L981.48 423.86 L983.06 422.78" stroke="#618368" stroke-width="1.8" stroke-linecap="butt"/>
<path d="M985.46 545.79 L984.25 546.21 L983.13 546.19 L982.17 545.74 L981.43 544.89 L980.97 543.69 L980.81 542.23 L980.76 432.63 L980.91 430.76 L981.39 428.83 L982.15 426.93 L983.16 425.16 L984.36 423.62 L985.69 422.38 L987.09 421.52" stroke="#5c5d5c" stroke-width="5.65" stroke-linecap="butt"/>
<path d="M985.46 545.79 L984.25 546.21 L983.13 546.19 L982.17 545.74 L981.43 544.89 L980.97 543.69 L980.81 542.23 L980.76 432.63 L980.91 430.76 L981.39 428.83 L982.15 426.93 L983.16 425.16 L984.36 423.62 L985.69 422.38 L987.09 421.52" stroke="#618368" stroke-width="2.65" stroke-linecap="butt"/>
<path d="M1036.81 470.79 L1036.81 460.16 L1037.01 458.02 L1037.62 455.81 L1038.6 453.68 L1039.87 451.78 L1041.34 450.24 L1042.93 449.15" stroke="#5c5d5c" stroke-width="4.8" stroke-linecap="butt"/>
<path d="M1036.81 470.79 L1036.81 460.16 L1037.01 458.02 L1037.62 455.81 L1038.6 453.68 L1039.87 451.78 L1041.34 450.24 L1042.93 449.15" stroke="#618368" stroke-width="1.8" stroke-linecap="butt"/>
<path d="M1045.32 572.16 L1044.12 572.58 L1043 572.56 L1042.04 572.11 L1041.3 571.26 L1040.84 570.07 L1040.68 568.61 L1040.62 459 L1040.78 457.14 L1041.25 455.2 L1042.01 453.3 L1043.02 451.54 L1044.23 449.99 L1045.56 448.76 L1046.96 447.9" stroke="#5c5d5c" stroke-width="5.65" stroke-linecap="butt"/>
<path d="M1045.32 572.16 L1044.12 572.58 L1043 572.56 L1042.04 572.11 L1041.3 571.26 L1040.84 570.07 L1040.68 568.61 L1040.62 459 L1040.78 457.14 L1041.25 455.2 L1042.01 453.3 L1043.02 451.54 L1044.23 449.99 L1045.56 448.76 L1046.96 447.9" stroke="#618368" stroke-width="2.65" stroke-linecap="butt"/>
<path d="M1096.68 497.16 L1096.67 486.53 L1096.88 484.39 L1097.49 482.19 L1098.46 480.06 L1099.73 478.16 L1101.21 476.61 L1102.8 475.53" stroke="#5c5d5c" stroke-width="4.8" stroke-linecap="butt"/>
<path d="M1096.68 497.16 L1096.67 486.53 L1096.88 484.39 L1097.49 482.19 L1098.46 480.06 L1099.73 478.16 L1101.21 476.61 L1102.8 475.53" stroke="#618368" stroke-width="1.8" stroke-linecap="butt"/>
<path d="M1105.19 598.54 L1103.99 598.95 L1102.87 598.94 L1101.91 598.49 L1101.17 597.64 L1100.7 596.44 L1100.54 594.98 L1100.49 485.38 L1100.65 483.51 L1101.12 481.58 L1101.88 479.68 L1102.89 477.91 L1104.09 476.37 L1105.43 475.13 L1106.83 474.27" stroke="#5c5d5c" stroke-width="5.65" stroke-linecap="butt"/>
<path d="M1105.19 598.54 L1103.99 598.95 L1102.87 598.94 L1101.91 598.49 L1101.17 597.64 L1100.7 596.44 L1100.54 594.98 L1100.49 485.38 L1100.65 483.51 L1101.12 481.58 L1101.88 479.68 L1102.89 477.91 L1104.09 476.37 L1105.43 475.13 L1106.83 474.27" stroke="#618368" stroke-width="2.65" stroke-linecap="butt"/>
<path d="M1156.55 523.54 L1156.54 512.91 L1156.75 510.77 L1157.36 508.56 L1158.33 506.43 L1159.6 504.53 L1161.08 502.99 L1162.66 501.9" stroke="#5c5d5c" stroke-width="4.8" stroke-linecap="butt"/>
<path d="M1156.55 523.54 L1156.54 512.91 L1156.75 510.77 L1157.36 508.56 L1158.33 506.43 L1159.6 504.53 L1161.08 502.99 L1162.66 501.9" stroke="#618368" stroke-width="1.8" stroke-linecap="butt"/>
<path d="M1165.06 624.91 L1163.86 625.33 L1162.74 625.31 L1161.77 624.86 L1161.03 624.01 L1160.57 622.81 L1160.41 621.36 L1160.36 511.75 L1160.52 509.89 L1160.99 507.95 L1161.75 506.05 L1162.76 504.28 L1163.96 502.74 L1165.3 501.51 L1166.69 500.64" stroke="#5c5d5c" stroke-width="5.65" stroke-linecap="butt"/>
<path d="M1165.06 624.91 L1163.86 625.33 L1162.74 625.31 L1161.77 624.86 L1161.03 624.01 L1160.57 622.81 L1160.41 621.36 L1160.36 511.75 L1160.52 509.89 L1160.99 507.95 L1161.75 506.05 L1162.76 504.28 L1163.96 502.74 L1165.3 501.51 L1166.69 500.64" stroke="#618368" stroke-width="2.65" stroke-linecap="butt"/>
<path d="M1216.41 549.91 L1216.41 539.28 L1216.62 537.14 L1217.23 534.93 L1218.2 532.81 L1219.47 530.91 L1220.95 529.36 L1222.53 528.28" stroke="#5c5d5c" stroke-width="4.8" stroke-linecap="butt"/>
<path d="M1216.41 549.91 L1216.41 539.28 L1216.62 537.14 L1217.23 534.93 L1218.2 532.81 L1219.47 530.91 L1220.95 529.36 L1222.53 528.28" stroke="#618368" stroke-width="1.8" stroke-linecap="butt"/>
<path d="M1224.93 651.29 L1223.72 651.7 L1222.6 651.69 L1221.64 651.24 L1220.9 650.38 L1220.44 649.19 L1220.28 647.73 L1220.22 538.13 L1220.38 536.26 L1220.86 534.33 L1221.62 532.43 L1222.62 530.66 L1223.83 529.12 L1225.16 527.88 L1226.56 527.02" stroke="#5c5d5c" stroke-width="5.65" stroke-linecap="butt"/>
<path d="M1224.93 651.29 L1223.72 651.7 L1222.6 651.69 L1221.64 651.24 L1220.9 650.38 L1220.44 649.19 L1220.28 647.73 L1220.22 538.13 L1220.38 536.26 L1220.86 534.33 L1221.62 532.43 L1222.62 530.66 L1223.83 529.12 L1225.16 527.88 L1226.56 527.02" stroke="#618368" stroke-width="2.65" stroke-linecap="butt"/>
<path d="M582.37 391.58 L1198.51 663.02" stroke="#5c5d5c" stroke-width="5.94" stroke-linecap="round"/>
<path d="M582.37 391.58 L1198.51 663.02" stroke="#e8e57c" stroke-width="2.94" stroke-linecap="round"/>
<path d="M582.32 277.93 L1198.45 549.36" stroke="#5c5d5c" stroke-width="5.07" stroke-linecap="round"/>
<path d="M582.32 277.93 L1198.45 549.36" stroke="#696ea8" stroke-width="2.07" stroke-linecap="round"/>
<path d="M582.32 277.93 L1198.45 549.36" stroke="#8390d4" stroke-width="1" stroke-dasharray="1.6 2.4" stroke-opacity="0.7"/>
<path d="M582.63 292.08 L582.62 282.72 L582.79 281.16 L583.29 279.56 L584.07 278.06 L585.06 276.78 L586.19 275.84 L587.34 275.32 L588.44 275.25 L589.37 275.66 L602 281.59" stroke="#5c5d5c" stroke-width="5.2" stroke-linecap="round"/>
<path d="M582.63 292.08 L582.62 282.72 L582.79 281.16 L583.29 279.56 L584.07 278.06 L585.06 276.78 L586.19 275.84 L587.34 275.32 L588.44 275.25 L589.37 275.66 L602 281.59" stroke="#618368" stroke-width="2.2" stroke-linecap="round"/>
<path d="M604.9 269.33 L589.87 277.07 L589.26 277.45 L588.65 277.95 L588.08 278.55 L587.55 279.23 L587.08 279.99 L586.68 280.81 L586.35 281.65 L586.12 282.51 L585.97 283.35 L585.92 284.17 L585.98 399.09 L586.03 399.86 L586.18 400.55 L586.41 401.17 L586.74 401.68 L587.14 402.07 L587.61 402.34 L588.14 402.49 L588.71 402.5 L589.32 402.37 L589.94 402.11" stroke="#5c5d5c" stroke-width="5.65" stroke-linecap="butt"/>
<path d="M604.9 269.33 L589.87 277.07 L589.26 277.45 L588.65 277.95 L588.08 278.55 L587.55 279.23 L587.08 279.99 L586.68 280.81 L586.35 281.65 L586.12 282.51 L585.97 283.35 L585.92 284.17 L585.98 399.09 L586.03 399.86 L586.18 400.55 L586.41 401.17 L586.74 401.68 L587.14 402.07 L587.61 402.34 L588.14 402.49 L588.71 402.5 L589.32 402.37 L589.94 402.11" stroke="#618368" stroke-width="2.65" stroke-linecap="butt"/>
<path d="M587.8 287.72 L588.29 291.51 L592.74 297.07" stroke="#5c5d5c" stroke-width="5.08" stroke-linecap="round"/>
<path d="M587.8 287.72 L588.29 291.51 L592.74 297.07" stroke="#618368" stroke-width="2.08" stroke-linecap="round"/>
<path d="M642.5 318.46 L642.49 309.09 L642.66 307.53 L643.16 305.93 L643.93 304.43 L644.93 303.16 L646.05 302.21 L647.21 301.69 L648.3 301.63 L649.24 302.03 L661.86 307.97" stroke="#5c5d5c" stroke-width="5.2" stroke-linecap="round"/>
<path d="M642.5 318.46 L642.49 309.09 L642.66 307.53 L643.16 305.93 L643.93 304.43 L644.93 303.16 L646.05 302.21 L647.21 301.69 L648.3 301.63 L649.24 302.03 L661.86 307.97" stroke="#618368" stroke-width="2.2" stroke-linecap="round"/>
<path d="M664.76 295.7 L649.74 303.44 L649.12 303.83 L648.52 304.32 L647.95 304.92 L647.42 305.61 L646.95 306.37 L646.55 307.18 L646.22 308.02 L645.98 308.88 L645.84 309.73 L645.79 310.54 L645.85 425.46 L645.9 426.23 L646.04 426.93 L646.28 427.54 L646.6 428.05 L647.01 428.45 L647.48 428.72 L648.01 428.86 L648.58 428.87 L649.19 428.74 L649.8 428.49" stroke="#5c5d5c" stroke-width="5.65" stroke-linecap="butt"/>
<path d="M664.76 295.7 L649.74 303.44 L649.12 303.83 L648.52 304.32 L647.95 304.92 L647.42 305.61 L646.95 306.37 L646.55 307.18 L646.22 308.02 L645.98 308.88 L645.84 309.73 L645.79 310.54 L645.85 425.46 L645.9 426.23 L646.04 426.93 L646.28 427.54 L646.6 428.05 L647.01 428.45 L647.48 428.72 L648.01 428.86 L648.58 428.87 L649.19 428.74 L649.8 428.49" stroke="#618368" stroke-width="2.65" stroke-linecap="butt"/>
<path d="M647.66 314.09 L648.16 317.89 L652.61 323.44" stroke="#5c5d5c" stroke-width="5.08" stroke-linecap="round"/>
<path d="M647.66 314.09 L648.16 317.89 L652.61 323.44" stroke="#618368" stroke-width="2.08" stroke-linecap="round"/>
<path d="M702.36 344.83 L702.36 335.46 L702.53 333.91 L703.02 332.31 L703.8 330.81 L704.8 329.53 L705.92 328.59 L707.08 328.06 L708.17 328 L709.1 328.41 L721.73 334.34" stroke="#5c5d5c" stroke-width="5.2" stroke-linecap="round"/>
<path d="M702.36 344.83 L702.36 335.46 L702.53 333.91 L703.02 332.31 L703.8 330.81 L704.8 329.53 L705.92 328.59 L707.08 328.06 L708.17 328 L709.1 328.41 L721.73 334.34" stroke="#618368" stroke-width="2.2" stroke-linecap="round"/>
<path d="M724.63 322.08 L709.61 329.82 L708.99 330.2 L708.39 330.7 L707.81 331.3 L707.29 331.98 L706.81 332.74 L706.41 333.55 L706.09 334.4 L705.85 335.25 L705.71 336.1 L705.66 336.92 L705.72 451.84 L705.76 452.6 L705.91 453.3 L706.15 453.91 L706.47 454.42 L706.88 454.82 L707.35 455.09 L707.88 455.24 L708.45 455.24 L709.05 455.12 L709.67 454.86" stroke="#5c5d5c" stroke-width="5.65" stroke-linecap="butt"/>
<path d="M724.63 322.08 L709.61 329.82 L708.99 330.2 L708.39 330.7 L707.81 331.3 L707.29 331.98 L706.81 332.74 L706.41 333.55 L706.09 334.4 L705.85 335.25 L705.71 336.1 L705.66 336.92 L705.72 451.84 L705.76 452.6 L705.91 453.3 L706.15 453.91 L706.47 454.42 L706.88 454.82 L707.35 455.09 L707.88 455.24 L708.45 455.24 L709.05 455.12 L709.67 454.86" stroke="#618368" stroke-width="2.65" stroke-linecap="butt"/>
<path d="M707.53 340.47 L708.03 344.26 L712.48 349.82" stroke="#5c5d5c" stroke-width="5.08" stroke-linecap="round"/>
<path d="M707.53 340.47 L708.03 344.26 L712.48 349.82" stroke="#618368" stroke-width="2.08" stroke-linecap="round"/>
<path d="M762.23 371.2 L762.22 361.84 L762.39 360.28 L762.89 358.68 L763.67 357.18 L764.66 355.9 L765.79 354.96 L766.95 354.44 L768.04 354.38 L768.97 354.78 L781.6 360.72" stroke="#5c5d5c" stroke-width="5.2" stroke-linecap="round"/>
<path d="M762.23 371.2 L762.22 361.84 L762.39 360.28 L762.89 358.68 L763.67 357.18 L764.66 355.9 L765.79 354.96 L766.95 354.44 L768.04 354.38 L768.97 354.78 L781.6 360.72" stroke="#618368" stroke-width="2.2" stroke-linecap="round"/>
<path d="M784.5 348.45 L769.48 356.19 L768.86 356.57 L768.26 357.07 L767.68 357.67 L767.15 358.36 L766.68 359.12 L766.28 359.93 L765.96 360.77 L765.72 361.63 L765.57 362.48 L765.53 363.29 L765.58 478.21 L765.63 478.98 L765.78 479.68 L766.01 480.29 L766.34 480.8 L766.74 481.19 L767.21 481.47 L767.74 481.61 L768.32 481.62 L768.92 481.49 L769.54 481.24" stroke="#5c5d5c" stroke-width="5.65" stroke-linecap="butt"/>
<path d="M784.5 348.45 L769.48 356.19 L768.86 356.57 L768.26 357.07 L767.68 357.67 L767.15 358.36 L766.68 359.12 L766.28 359.93 L765.96 360.77 L765.72 361.63 L765.57 362.48 L765.53 363.29 L765.58 478.21 L765.63 478.98 L765.78 479.68 L766.01 480.29 L766.34 480.8 L766.74 481.19 L767.21 481.47 L767.74 481.61 L768.32 481.62 L768.92 481.49 L769.54 481.24" stroke="#618368" stroke-width="2.65" stroke-linecap="butt"/>
<path d="M767.4 366.84 L767.89 370.64 L772.35 376.19" stroke="#5c5d5c" stroke-width="5.08" stroke-linecap="round"/>
<path d="M767.4 366.84 L767.89 370.64 L772.35 376.19" stroke="#618368" stroke-width="2.08" stroke-linecap="round"/>
<path d="M822.1 397.58 L822.09 388.21 L822.26 386.66 L822.76 385.06 L823.54 383.55 L824.53 382.28 L825.66 381.34 L826.81 380.81 L827.91 380.75 L828.84 381.16 L841.47 387.09" stroke="#5c5d5c" stroke-width="5.2" stroke-linecap="round"/>
<path d="M822.1 397.58 L822.09 388.21 L822.26 386.66 L822.76 385.06 L823.54 383.55 L824.53 382.28 L825.66 381.34 L826.81 380.81 L827.91 380.75 L828.84 381.16 L841.47 387.09" stroke="#618368" stroke-width="2.2" stroke-linecap="round"/>
<path d="M844.37 374.83 L829.34 382.57 L828.73 382.95 L828.12 383.44 L827.55 384.04 L827.02 384.73 L826.55 385.49 L826.15 386.3 L825.82 387.15 L825.59 388 L825.44 388.85 L825.39 389.67 L825.45 504.59 L825.5 505.35 L825.64 506.05 L825.88 506.66 L826.21 507.17 L826.61 507.57 L827.08 507.84 L827.61 507.98 L828.18 507.99 L828.79 507.87 L829.41 507.61" stroke="#5c5d5c" stroke-width="5.65" stroke-linecap="butt"/>
<path d="M844.37 374.83 L829.34 382.57 L828.73 382.95 L828.12 383.44 L827.55 384.04 L827.02 384.73 L826.55 385.49 L826.15 386.3 L825.82 387.15 L825.59 388 L825.44 388.85 L825.39 389.67 L825.45 504.59 L825.5 505.35 L825.64 506.05 L825.88 506.66 L826.21 507.17 L826.61 507.57 L827.08 507.84 L827.61 507.98 L828.18 507.99 L828.79 507.87 L829.41 507.61" stroke="#618368" stroke-width="2.65" stroke-linecap="butt"/>
<path d="M827.27 393.22 L827.76 397.01 L832.21 402.57" stroke="#5c5d5c" stroke-width="5.08" stroke-linecap="round"/>
<path d="M827.27 393.22 L827.76 397.01 L832.21 402.57" stroke="#618368" stroke-width="2.08" stroke-linecap="round"/>
<path d="M881.96 423.95 L881.96 414.59 L882.13 413.03 L882.62 411.43 L883.4 409.93 L884.4 408.65 L885.52 407.71 L886.68 407.19 L887.77 407.12 L888.71 407.53 L901.33 413.46" stroke="#5c5d5c" stroke-width="5.2" stroke-linecap="round"/>
<path d="M881.96 423.95 L881.96 414.59 L882.13 413.03 L882.62 411.43 L883.4 409.93 L884.4 408.65 L885.52 407.71 L886.68 407.19 L887.77 407.12 L888.71 407.53 L901.33 413.46" stroke="#618368" stroke-width="2.2" stroke-linecap="round"/>
<path d="M904.23 401.2 L889.21 408.94 L888.59 409.32 L887.99 409.82 L887.42 410.42 L886.89 411.11 L886.42 411.86 L886.01 412.68 L885.69 413.52 L885.45 414.38 L885.31 415.22 L885.26 416.04 L885.32 530.96 L885.37 531.73 L885.51 532.42 L885.75 533.04 L886.07 533.55 L886.48 533.94 L886.95 534.22 L887.48 534.36 L888.05 534.37 L888.65 534.24 L889.27 533.99" stroke="#5c5d5c" stroke-width="5.65" stroke-linecap="butt"/>
<path d="M904.23 401.2 L889.21 408.94 L888.59 409.32 L887.99 409.82 L887.42 410.42 L886.89 411.11 L886.42 411.86 L886.01 412.68 L885.69 413.52 L885.45 414.38 L885.31 415.22 L885.26 416.04 L885.32 530.96 L885.37 531.73 L885.51 532.42 L885.75 533.04 L886.07 533.55 L886.48 533.94 L886.95 534.22 L887.48 534.36 L888.05 534.37 L888.65 534.24 L889.27 533.99" stroke="#618368" stroke-width="2.65" stroke-linecap="butt"/>
<path d="M887.13 419.59 L887.63 423.38 L892.08 428.94" stroke="#5c5d5c" stroke-width="5.08" stroke-linecap="round"/>
<path d="M887.13 419.59 L887.63 423.38 L892.08 428.94" stroke="#618368" stroke-width="2.08" stroke-linecap="round"/>
<path d="M941.83 450.33 L941.83 440.96 L942 439.4 L942.49 437.81 L943.27 436.3 L944.26 435.03 L945.39 434.09 L946.55 433.56 L947.64 433.5 L948.57 433.9 L961.2 439.84" stroke="#5c5d5c" stroke-width="5.2" stroke-linecap="round"/>
<path d="M941.83 450.33 L941.83 440.96 L942 439.4 L942.49 437.81 L943.27 436.3 L944.26 435.03 L945.39 434.09 L946.55 433.56 L947.64 433.5 L948.57 433.9 L961.2 439.84" stroke="#618368" stroke-width="2.2" stroke-linecap="round"/>
<path d="M964.1 427.58 L949.08 435.32 L948.46 435.7 L947.86 436.19 L947.28 436.79 L946.76 437.48 L946.28 438.24 L945.88 439.05 L945.56 439.9 L945.32 440.75 L945.18 441.6 L945.13 442.42 L945.18 557.33 L945.23 558.1 L945.38 558.8 L945.62 559.41 L945.94 559.92 L946.34 560.32 L946.82 560.59 L947.35 560.73 L947.92 560.74 L948.52 560.62 L949.14 560.36" stroke="#5c5d5c" stroke-width="5.65" stroke-linecap="butt"/>
<path d="M964.1 427.58 L949.08 435.32 L948.46 435.7 L947.86 436.19 L947.28 436.79 L946.76 437.48 L946.28 438.24 L945.88 439.05 L945.56 439.9 L945.32 440.75 L945.18 441.6 L945.13 442.42 L945.18 557.33 L945.23 558.1 L945.38 558.8 L945.62 559.41 L945.94 559.92 L946.34 560.32 L946.82 560.59 L947.35 560.73 L947.92 560.74 L948.52 560.62 L949.14 560.36" stroke="#618368" stroke-width="2.65" stroke-linecap="butt"/>
<path d="M947 445.96 L947.5 449.76 L951.95 455.31" stroke="#5c5d5c" stroke-width="5.08" stroke-linecap="round"/>
<path d="M947 445.96 L947.5 449.76 L951.95 455.31" stroke="#618368" stroke-width="2.08" stroke-linecap="round"/>
<path d="M1001.7 476.7 L1001.69 467.34 L1001.86 465.78 L1002.36 464.18 L1003.14 462.68 L1004.13 461.4 L1005.26 460.46 L1006.42 459.94 L1007.51 459.87 L1008.44 460.28 L1021.07 466.21" stroke="#5c5d5c" stroke-width="5.2" stroke-linecap="round"/>
<path d="M1001.7 476.7 L1001.69 467.34 L1001.86 465.78 L1002.36 464.18 L1003.14 462.68 L1004.13 461.4 L1005.26 460.46 L1006.42 459.94 L1007.51 459.87 L1008.44 460.28 L1021.07 466.21" stroke="#618368" stroke-width="2.2" stroke-linecap="round"/>
<path d="M1023.97 453.95 L1008.95 461.69 L1008.33 462.07 L1007.72 462.57 L1007.15 463.17 L1006.62 463.85 L1006.15 464.61 L1005.75 465.42 L1005.42 466.27 L1005.19 467.13 L1005.04 467.97 L1005 468.79 L1005.05 583.71 L1005.1 584.48 L1005.25 585.17 L1005.48 585.78 L1005.81 586.29 L1006.21 586.69 L1006.68 586.96 L1007.21 587.11 L1007.79 587.12 L1008.39 586.99 L1009.01 586.73" stroke="#5c5d5c" stroke-width="5.65" stroke-linecap="butt"/>
<path d="M1023.97 453.95 L1008.95 461.69 L1008.33 462.07 L1007.72 462.57 L1007.15 463.17 L1006.62 463.85 L1006.15 464.61 L1005.75 465.42 L1005.42 466.27 L1005.19 467.13 L1005.04 467.97 L1005 468.79 L1005.05 583.71 L1005.1 584.48 L1005.25 585.17 L1005.48 585.78 L1005.81 586.29 L1006.21 586.69 L1006.68 586.96 L1007.21 587.11 L1007.79 587.12 L1008.39 586.99 L1009.01 586.73" stroke="#618368" stroke-width="2.65" stroke-linecap="butt"/>
<path d="M1006.87 472.34 L1007.36 476.13 L1011.81 481.69" stroke="#5c5d5c" stroke-width="5.08" stroke-linecap="round"/>
<path d="M1006.87 472.34 L1007.36 476.13 L1011.81 481.69" stroke="#618368" stroke-width="2.08" stroke-linecap="round"/>
<path d="M1061.57 503.08 L1061.56 493.71 L1061.73 492.15 L1062.23 490.55 L1063 489.05 L1064 487.77 L1065.12 486.83 L1066.28 486.31 L1067.38 486.25 L1068.31 486.65 L1080.94 492.59" stroke="#5c5d5c" stroke-width="5.2" stroke-linecap="round"/>
<path d="M1061.57 503.08 L1061.56 493.71 L1061.73 492.15 L1062.23 490.55 L1063 489.05 L1064 487.77 L1065.12 486.83 L1066.28 486.31 L1067.38 486.25 L1068.31 486.65 L1080.94 492.59" stroke="#618368" stroke-width="2.2" stroke-linecap="round"/>
<path d="M1083.83 480.32 L1068.81 488.06 L1068.19 488.45 L1067.59 488.94 L1067.02 489.54 L1066.49 490.23 L1066.02 490.99 L1065.62 491.8 L1065.29 492.64 L1065.06 493.5 L1064.91 494.35 L1064.86 495.16 L1064.92 610.08 L1064.97 610.85 L1065.11 611.55 L1065.35 612.16 L1065.68 612.67 L1066.08 613.07 L1066.55 613.34 L1067.08 613.48 L1067.65 613.49 L1068.26 613.36 L1068.87 613.11" stroke="#5c5d5c" stroke-width="5.65" stroke-linecap="butt"/>
<path d="M1083.83 480.32 L1068.81 488.06 L1068.19 488.45 L1067.59 488.94 L1067.02 489.54 L1066.49 490.23 L1066.02 490.99 L1065.62 491.8 L1065.29 492.64 L1065.06 493.5 L1064.91 494.35 L1064.86 495.16 L1064.92 610.08 L1064.97 610.85 L1065.11 611.55 L1065.35 612.16 L1065.68 612.67 L1066.08 613.07 L1066.55 613.34 L1067.08 613.48 L1067.65 613.49 L1068.26 613.36 L1068.87 613.11" stroke="#618368" stroke-width="2.65" stroke-linecap="butt"/>
<path d="M1066.73 498.71 L1067.23 502.51 L1071.68 508.06" stroke="#5c5d5c" stroke-width="5.08" stroke-linecap="round"/>
<path d="M1066.73 498.71 L1067.23 502.51 L1071.68 508.06" stroke="#618368" stroke-width="2.08" stroke-linecap="round"/>
<path d="M1121.43 529.45 L1121.43 520.08 L1121.6 518.53 L1122.09 516.93 L1122.87 515.43 L1123.87 514.15 L1124.99 513.21 L1126.15 512.68 L1127.24 512.62 L1128.18 513.03 L1140.8 518.96" stroke="#5c5d5c" stroke-width="5.2" stroke-linecap="round"/>
<path d="M1121.43 529.45 L1121.43 520.08 L1121.6 518.53 L1122.09 516.93 L1122.87 515.43 L1123.87 514.15 L1124.99 513.21 L1126.15 512.68 L1127.24 512.62 L1128.18 513.03 L1140.8 518.96" stroke="#618368" stroke-width="2.2" stroke-linecap="round"/>
<path d="M1143.7 506.7 L1128.68 514.44 L1128.06 514.82 L1127.46 515.32 L1126.89 515.92 L1126.36 516.6 L1125.89 517.36 L1125.48 518.17 L1125.16 519.02 L1124.92 519.87 L1124.78 520.72 L1124.73 521.54 L1124.79 636.46 L1124.84 637.22 L1124.98 637.92 L1125.22 638.53 L1125.54 639.04 L1125.95 639.44 L1126.42 639.71 L1126.95 639.86 L1127.52 639.86 L1128.12 639.74 L1128.74 639.48" stroke="#5c5d5c" stroke-width="5.65" stroke-linecap="butt"/>
<path d="M1143.7 506.7 L1128.68 514.44 L1128.06 514.82 L1127.46 515.32 L1126.89 515.92 L1126.36 516.6 L1125.89 517.36 L1125.48 518.17 L1125.16 519.02 L1124.92 519.87 L1124.78 520.72 L1124.73 521.54 L1124.79 636.46 L1124.84 637.22 L1124.98 637.92 L1125.22 638.53 L1125.54 639.04 L1125.95 639.44 L1126.42 639.71 L1126.95 639.86 L1127.52 639.86 L1128.12 639.74 L1128.74 639.48" stroke="#618368" stroke-width="2.65" stroke-linecap="butt"/>
<path d="M1126.6 525.09 L1127.1 528.88 L1131.55 534.44" stroke="#5c5d5c" stroke-width="5.08" stroke-linecap="round"/>
<path d="M1126.6 525.09 L1127.1 528.88 L1131.55 534.44" stroke="#618368" stroke-width="2.08" stroke-linecap="round"/>
<path d="M1181.3 555.82 L1181.3 546.46 L1181.47 544.9 L1181.96 543.3 L1182.74 541.8 L1183.73 540.52 L1184.86 539.58 L1186.02 539.06 L1187.11 539 L1188.04 539.4 L1200.67 545.34" stroke="#5c5d5c" stroke-width="5.2" stroke-linecap="round"/>
<path d="M1181.3 555.82 L1181.3 546.46 L1181.47 544.9 L1181.96 543.3 L1182.74 541.8 L1183.73 540.52 L1184.86 539.58 L1186.02 539.06 L1187.11 539 L1188.04 539.4 L1200.67 545.34" stroke="#618368" stroke-width="2.2" stroke-linecap="round"/>
<path d="M1203.57 533.07 L1188.55 540.81 L1187.93 541.19 L1187.33 541.69 L1186.75 542.29 L1186.22 542.98 L1185.75 543.74 L1185.35 544.55 L1185.03 545.39 L1184.79 546.25 L1184.65 547.1 L1184.6 547.91 L1184.65 662.83 L1184.7 663.6 L1184.85 664.3 L1185.09 664.91 L1185.41 665.42 L1185.81 665.81 L1186.29 666.09 L1186.81 666.23 L1187.39 666.24 L1187.99 666.11 L1188.61 665.86" stroke="#5c5d5c" stroke-width="5.65" stroke-linecap="butt"/>
<path d="M1203.57 533.07 L1188.55 540.81 L1187.93 541.19 L1187.33 541.69 L1186.75 542.29 L1186.22 542.98 L1185.75 543.74 L1185.35 544.55 L1185.03 545.39 L1184.79 546.25 L1184.65 547.1 L1184.6 547.91 L1184.65 662.83 L1184.7 663.6 L1184.85 664.3 L1185.09 664.91 L1185.41 665.42 L1185.81 665.81 L1186.29 666.09 L1186.81 666.23 L1187.39 666.24 L1187.99 666.11 L1188.61 665.86" stroke="#618368" stroke-width="2.65" stroke-linecap="butt"/>
<path d="M1186.47 551.46 L1186.97 555.26 L1191.42 560.81" stroke="#5c5d5c" stroke-width="5.08" stroke-linecap="round"/>
<path d="M1186.47 551.46 L1186.97 555.26 L1191.42 560.81" stroke="#618368" stroke-width="2.08" stroke-linecap="round"/>
<ellipse cx="1258.2" cy="632.26" rx="1.84" ry="2.82" fill="#dcd873" stroke="#5c5d5c" stroke-width="0.9" transform="rotate(-27 1258.2 632.26)"/>
<ellipse cx="1228.35" cy="647.64" rx="1.84" ry="2.82" fill="#dcd873" stroke="#5c5d5c" stroke-width="0.9" transform="rotate(-27 1228.35 647.64)"/>
<ellipse cx="1198.51" cy="663.02" rx="1.84" ry="2.82" fill="#dcd873" stroke="#5c5d5c" stroke-width="0.9" transform="rotate(-27 1198.51 663.02)"/>
</g>
<path d="M552.57 413.92 L552.5 262.05 L1191.43 543.53 L1191.5 695.4Z" fill="#eaedef" fill-opacity="0.1"/>
<path d="M1191.5 695.4 L1191.43 543.53 L1290.25 492.6 L1290.32 644.47Z" fill="#e6e9ea" fill-opacity="0.06"/>
<path d="M552.5 262.05 L651.32 211.12 L1290.25 492.6 L1191.43 543.53Z" fill="#d2d5d7" fill-opacity="0.0"/>
<path d="M563.22 405.96 L563.16 279.4 L1180.78 551.49 L1180.85 678.05Z" stroke="#0a0a0a" stroke-width="1.25"/>
<path d="M1201.38 677.65 L1201.31 551.09 L1280.37 510.35 L1280.44 636.91Z" stroke="#1c1c1c" stroke-width="1.2"/>
<path d="M552.5 262.05 L1191.43 543.53" stroke="#000" stroke-width="1.4"/>
<path d="M1191.43 543.53 L1191.5 695.4" stroke="#000" stroke-width="1.4"/>
<path d="M1191.43 543.53 L1290.25 492.6" stroke="#000" stroke-width="1.4"/>
<path d="M552.57 413.92 L552.5 262.05 L651.32 211.12 L1290.25 492.6 L1290.32 644.47 L1191.5 695.4" stroke="#000" stroke-width="2.5" stroke-linejoin="miter"/>
<path d="M552.57 413.92 L1191.5 695.4" stroke="#3a0000" stroke-width="2.4"/>
<path d="M552.57 413.92 L1191.5 695.4" stroke="#b00000" stroke-width="1.5" stroke-dasharray="2.6 1.4"/>
<path d="M552.57 412.92 v-7" stroke="#0000c8" stroke-width="2"/>
<g id="dims" stroke="#3c3c3c" stroke-width="1.05">
<path d="M549.61 415.45 L450.24 468.23"/>
<path d="M1188.54 696.93 L1089.44 749.23"/>
<path d="M453.8 466.4 L1093 747.4"/>
<path d="M443.3 466.4 h21" stroke-width="2.6"/>
<path d="M447.8 462.9 l10 5" stroke-width="1"/>
<path d="M1082.5 747.4 h21" stroke-width="2.6"/>
<path d="M1087 743.9 l10 5" stroke-width="1"/>
<path d="M560.55 407.33 L494.14 443.03"/>
<path d="M1178.18 679.43 L1111.94 714.83"/>
<path d="M497.7 441.2 L1115.5 713"/>
<path d="M487.2 441.2 h21" stroke-width="2.6"/>
<path d="M491.7 437.7 l10 5" stroke-width="1"/>
<path d="M1105 713 h21" stroke-width="2.6"/>
<path d="M1109.5 709.5 l10 5" stroke-width="1"/>
<path d="M1293.44 494.01 L1380.76 532.48"/>
<path d="M1293.52 645.88 L1380.84 684.35"/>
<path d="M1377.64 682.94 L1377.57 531.07"/>
<path d="M1371.44 673.94 l11.5 17.5" stroke-width="2.8"/>
<path d="M1373.64 684.94 l8 -4" stroke-width="1"/>
<path d="M1371.37 522.07 l11.5 17.5" stroke-width="2.8"/>
<path d="M1373.57 533.07 l8 -4" stroke-width="1"/>
<path d="M1283.57 511.76 L1324.03 529.58"/>
<path d="M1283.63 638.32 L1324.1 656.15"/>
<path d="M1320.9 654.74 L1320.84 528.18"/>
<path d="M1314.7 645.74 l11.5 17.5" stroke-width="2.8"/>
<path d="M1316.9 656.74 l8 -4" stroke-width="1"/>
<path d="M1314.64 519.18 l11.5 17.5" stroke-width="2.8"/>
<path d="M1316.84 530.18 l8 -4" stroke-width="1"/>
<path d="M1194.69 696.81 L1282.01 735.28"/>
<path d="M1278.82 733.87 L1377.64 682.94"/>
<path d="M1278.82 728.87 v10" stroke-width="2.2"/>
<path d="M1274.82 735.87 l8 -4" stroke-width="1"/>
<path d="M1204.57 679.06 L1245.04 696.89"/>
<path d="M1241.84 695.48 L1320.9 654.74"/>
<path d="M1241.84 690.48 v10" stroke-width="2.2"/>
<path d="M1237.84 697.48 l8 -4" stroke-width="1"/>
</g>
<path d="M1280.82 734.77 L1676.8 910" stroke="#b80000" stroke-width="1.15"/>
<g font-family="'Liberation Sans', sans-serif" opacity="0.92">
<text transform="matrix(1.92 0.84 -1.98 1.02 794.54 583.31)" font-size="7.3" text-anchor="middle" y="2.63" fill="#444" stroke="none">290 cm</text>
<text transform="matrix(1.92 0.84 -1.98 1.02 761.34 613.11)" font-size="7.3" text-anchor="middle" y="2.63" fill="#444" stroke="none">300 cm</text>
<text transform="matrix(1.78 -0.92 2.13 0.94 1292.16 681.33)" font-size="7.3" text-anchor="middle" y="2.63" fill="#444" stroke="none">40 cm</text>
<text transform="matrix(1.78 -0.92 2.13 0.94 1339.02 714.63)" font-size="7.3" text-anchor="middle" y="2.63" fill="#444" stroke="none">50 cm</text>
<text transform="matrix(-0 -2.53 2.13 0.94 1333.86 597.18)" font-size="7.3" text-anchor="middle" y="2.63" fill="#444" stroke="none">50 cm</text>
<text transform="matrix(-0 -2.53 2.13 0.94 1390.6 612.73)" font-size="7.3" text-anchor="middle" y="2.63" fill="#444" stroke="none">60 cm</text>
</g>
<rect y="908.4" width="1820" height="1.6" fill="#ededf2"/>
</svg>
<div id="tb"><div id="tbtitle"><span>ISNUPNO KIT REBAR — PRO 1.0.6b</span></div><svg id="tbicons" width="1086" height="73" viewBox="311 24 1086 73" fill="none" stroke-linecap="round" stroke-linejoin="round"><path d="M318.4 66.9 V82.6 Q318.4 90.05 326.1 90.05 H341.2" stroke="#f03e3e" stroke-width="2.9"/><circle cx="326.9" cy="81.6" r="5" fill="#fff" stroke="#2a2a2a" stroke-width="2.4"/><text x="333.0" y="83.5">0</text><path d="M360.3 81.1 H386.7" stroke="#ee3a3a" stroke-width="2.4"/><path d="M398.4 66.9 V82.6 Q398.4 90.05 406.1 90.05 H421.2" stroke="#f03e3e" stroke-width="2.9"/><circle cx="406.9" cy="81.6" r="5" fill="#fff" stroke="#2a2a2a" stroke-width="2.4"/><text x="413.0" y="83.5">1</text><rect x="414.5" y="80.6" width="5.2" height="3.4" fill="#f1f0f5"/><rect x="426.3" y="80.6" width="5.5" height="3.4" fill="#f1f0f5"/><path d="M440.9 65.8 V76.5 Q440.9 81.05 445.5 81.05 H466.1" stroke="#ee3a3a" stroke-width="2.4"/><path d="M490.8 72.35 H485.4 A4.35 4.35 0 0 0 485.4 81.05 H506.2" stroke="#ee3a3a" stroke-width="2.4"/><path d="M527 70.4 L521.6 76.2 Q517.6 81.05 524.2 81.05 H546.2" stroke="#ee3a3a" stroke-width="2.4"/><path d="M561.2 65.8 L566.6 77 Q568.5 81.05 573 81.05 H586.2" stroke="#ee3a3a" stroke-width="2.4"/><path d="M598.5 66.9 V82.6 Q598.5 90.05 606.1 90.05 H621.2" stroke="#f03e3e" stroke-width="2.9"/><circle cx="606.9" cy="81.6" r="5" fill="#fff" stroke="#2a2a2a" stroke-width="2.4"/><text x="613.0" y="83.5">2</text><path d="M640.9 64.1 V76.2 Q640.9 81.2 645.9 81.2 H660.9 Q665.9 81.2 665.9 76.2 V64.1" stroke="#ee3a3a" stroke-width="2.4"/><path d="M704.1 64.1 V76.2 Q704.1 81.2 699.1 81.2 H686.8 A4.3 4.3 0 0 1 686.8 72.6 H690.6" stroke="#ee3a3a" stroke-width="2.4"/><path d="M721.1 64.4 L724.6 77 Q725.8 81 730.5 81 H736.5 Q741.2 81 742.4 77 L745.8 64.4" stroke="#ee3a3a" stroke-width="2.4"/><path d="M786.2 62.6 H780.5 Q777.6 62.6 777 65.4 L772.3 84.8 Q771.6 87.65 768.6 87.65 H761" stroke="#ee3a3a" stroke-width="2.4"/><path d="M798.5 66.9 V82.6 Q798.5 90.05 806.1 90.05 H821.2" stroke="#f03e3e" stroke-width="2.9"/><circle cx="806.9" cy="81.6" r="5" fill="#fff" stroke="#2a2a2a" stroke-width="2.4"/><text x="813.0" y="83.5">3</text><path d="M866.1 64.5 V75.8 Q866.1 81.25 860.6 81.25 H846.4 Q840.95 81.25 840.95 75.8 V74.6 Q840.95 69.15 846.4 69.15 H848.8" stroke="#ee3a3a" stroke-width="2.4"/><rect x="889.4" y="62.6" width="8.5" height="24.9" rx="4.25" stroke="#ee3a3a" stroke-width="2.3"/><path d="M918.5 66.9 V82.6 Q918.5 90.05 926.1 90.05 H941.2" stroke="#f03e3e" stroke-width="2.9"/><circle cx="926.9" cy="81.6" r="5" fill="#fff" stroke="#2a2a2a" stroke-width="2.4"/><text x="933.0" y="83.5">4</text><path d="M967.5 63.95 H965.4 Q960.9 63.95 960.9 68.45 V76.8 Q960.9 81.3 965.4 81.3 H981.6 Q986.1 81.3 986.1 76.8 V68.45 Q986.1 63.95 981.6 63.95 H979.4" stroke="#ee3a3a" stroke-width="2.4"/><path d="M1001 64.4 H1003.6 Q1007.6 64.4 1007.6 68.4 V77.3 Q1007.6 81.3 1011.6 81.3 H1015.6 Q1019.6 81.3 1019.6 77.3 V68.4 Q1019.6 64.4 1023.6 64.4 H1026.1" stroke="#ee3a3a" stroke-width="2.4"/><path d="M1044.9 69.2 V66.4 A2 2 0 0 0 1040.9 66.4 V77.3 Q1040.9 81.3 1044.9 81.3 H1062.1 Q1066.1 81.3 1066.1 77.3 V66.4 A2.05 2.05 0 0 0 1062 66.4 V69.2" stroke="#ee3a3a" stroke-width="2.3"/><path d="M1088.2 67.8 L1085 64.6 Q1083.5 63.4 1082.2 64.6 Q1081 65.8 1081 68 V77.3 Q1081 81.3 1085 81.3 H1102.1 Q1106.1 81.3 1106.1 77.3 V68 Q1106.1 65.8 1104.9 64.6 Q1103.6 63.4 1102.1 64.6 L1098.9 67.8" stroke="#ee3a3a" stroke-width="2.3"/><path d="M1118.5 66.9 V82.6 Q1118.5 90.05 1126.0 90.05 H1141.2" stroke="#f03e3e" stroke-width="2.9"/><circle cx="1126.9" cy="81.6" r="5" fill="#fff" stroke="#2a2a2a" stroke-width="2.4"/><text x="1133.0" y="83.5">5</text><rect x="1160.95" y="64.15" width="25.1" height="17.3" rx="3.6" stroke="#ee3a3a" stroke-width="2.5"/><rect x="1201.05" y="64.15" width="25.1" height="17.3" rx="3.6" stroke="#ee3a3a" stroke-width="2.5"/><path d="M1201.8 67 L1205.4 71" stroke="#ee3a3a" stroke-width="2.0"/><path d="M1204.6 64.8 L1208.8 68.2" stroke="#ee3a3a" stroke-width="2.0"/><rect x="1166" y="63.4" width="1.2" height="1.6" fill="#300"/><circle cx="1254.1" cy="65.6" r="4.6" fill="#000"/><circle cx="1254.1" cy="75.6" r="4.6" fill="#000"/><circle cx="1254.1" cy="85.6" r="4.6" fill="#000"/><path d="M1283.3 60.8 H1297.8 L1304.8 67.8 V87.3 Q1304.8 89.3 1302.8 89.3 H1283.3 Q1281.3 89.3 1281.3 87.3 V62.8 Q1281.3 60.8 1283.3 60.8 Z" stroke="#ef7474" stroke-width="1.6"/><path d="M1297.8 60.8 V67.8 H1304.8" stroke="#ef7474" stroke-width="1.4"/><circle cx="1288.2" cy="68.8" r="3.1" fill="#ef5a5a"/><path d="M1286.4 70.4 L1290 67.2" stroke="#f7c8c8" stroke-width="0.9"/><path d="M1285.4 74.9 H1301" stroke="#ef7474" stroke-width="1.4"/><path d="M1285.4 78.4 H1301" stroke="#ef7474" stroke-width="1.4"/><path d="M1285.4 82.4 H1295" stroke="#ef7474" stroke-width="1.4"/><path d="M1330.8 63.6 L1331.1 60.4 L1335.7 60.4 L1336.0 63.6 L1340.5 65.4 L1343.1 63.4 L1346.3 66.6 L1344.3 69.2 L1346.1 73.7 L1349.3 74.0 L1349.3 78.6 L1346.1 78.9 L1344.3 83.4 L1346.3 86.0 L1343.1 89.2 L1340.5 87.2 L1336.0 89.0 L1335.7 92.2 L1331.1 92.2 L1330.8 89.0 L1326.3 87.2 L1323.7 89.2 L1320.5 86.0 L1322.5 83.4 L1320.7 78.9 L1317.5 78.6 L1317.5 74.0 L1320.7 73.7 L1322.5 69.2 L1320.5 66.6 L1323.7 63.4 L1326.3 65.4Z" stroke="#8fb3df" stroke-width="2.1" stroke-linejoin="round"/><path d="M1330.8 63.6 L1331.1 60.4 L1335.7 60.4 L1336.0 63.6 L1340.5 65.4 L1343.1 63.4 L1346.3 66.6 L1344.3 69.2 L1346.1 73.7 L1349.3 74.0 L1349.3 78.6 L1346.1 78.9 L1344.3 83.4 L1346.3 86.0 L1343.1 89.2 L1340.5 87.2 L1336.0 89.0 L1335.7 92.2 L1331.1 92.2 L1330.8 89.0 L1326.3 87.2 L1323.7 89.2 L1320.5 86.0 L1322.5 83.4 L1320.7 78.9 L1317.5 78.6 L1317.5 74.0 L1320.7 73.7 L1322.5 69.2 L1320.5 66.6 L1323.7 63.4 L1326.3 65.4Z" stroke="#4040d8" stroke-width="1.05" stroke-linejoin="round" stroke-dasharray="1.8 2.0"/><circle cx="1333.5" cy="72.6" r="5" stroke="#5050d8" stroke-width="1.2"/><path d="M1329.3 77.6 L1338 67.2" stroke="#5050d8" stroke-width="1.2"/><rect x="1327" y="80.3" width="13" height="2.2" fill="#8cb1de"/><rect x="1327" y="82.5" width="9" height="2" fill="#8cb1de"/><rect x="1362.1" y="74" width="20.1" height="13.6" rx="1.6" fill="#000"/><path d="M1365.1 75 V70.7 A7.15 7.15 0 0 1 1379.4 70.7 V75" stroke="#0a0a0a" stroke-width="2.2"/><path d="M1377.2 33.8 L1386.8 43.4 M1386.8 33.8 L1377.2 43.4" stroke="#5b4f9b" stroke-width="1.3"/></svg></div>
</body>
</html>
